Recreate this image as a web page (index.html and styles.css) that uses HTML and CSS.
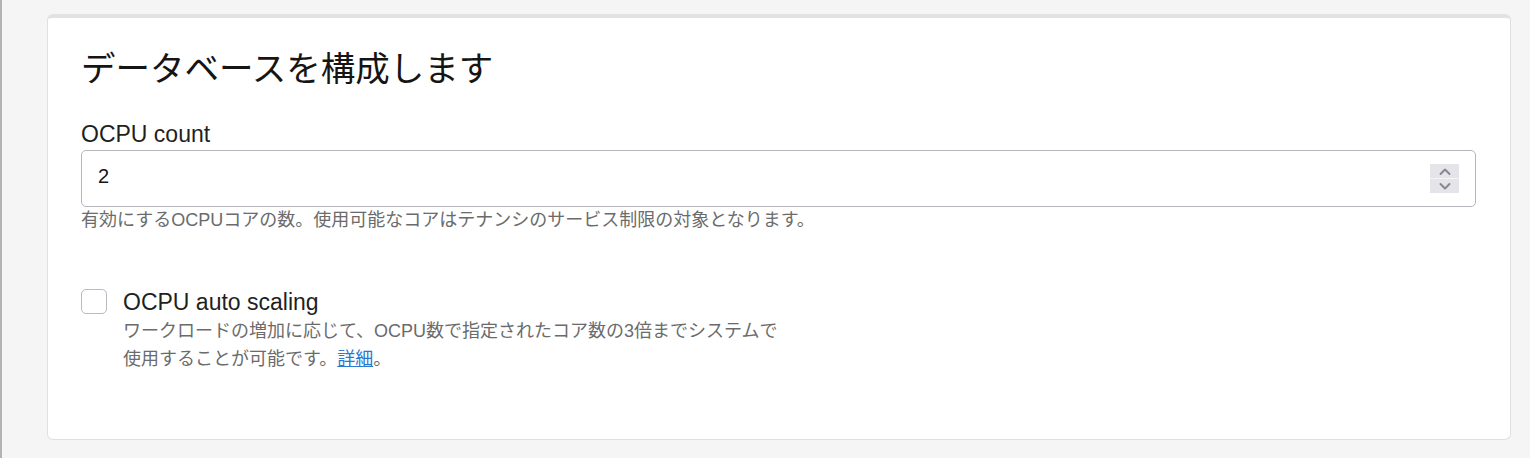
FILE: index.html
```html
<!DOCTYPE html>
<html lang="ja">
<head>
<meta charset="utf-8">
<title>データベースを構成します</title>
<link rel="stylesheet" href="styles.css">
</head>
<body>
<main class="page">
  <section class="card">
    <h1 class="title">データベースを構成します</h1>

    <div class="form-group">
      <label class="label" for="ocpu">OCPU count</label>
      <div class="field">
        <input class="field-input" id="ocpu" type="text" value="2">
        <div class="spinner" aria-hidden="true">
          <span class="spin-btn">
            <svg width="14" height="9" viewBox="0 0 14 9"><path d="M2.5 7 L7 2.5 L11.5 7" fill="none" stroke="#878793" stroke-width="2" stroke-linecap="round" stroke-linejoin="round"/></svg>
          </span>
          <span class="spin-btn">
            <svg width="14" height="9" viewBox="0 0 14 9"><path d="M2.5 2 L7 6.5 L11.5 2" fill="none" stroke="#878793" stroke-width="2" stroke-linecap="round" stroke-linejoin="round"/></svg>
          </span>
        </div>
      </div>
      <p class="help">有効にするOCPUコアの数。使用可能なコアはテナンシのサービス制限の対象となります。</p>
    </div>

    <div class="check-row">
      <input class="checkbox" type="checkbox" id="autoscale">
      <div class="check-body">
        <label class="check-label" for="autoscale">OCPU auto scaling</label>
        <p class="check-desc">ワークロードの増加に応じて、OCPU数で指定されたコア数の3倍までシステムで使用することが可能です。<a class="link" href="#">詳細</a>。</p>
      </div>
    </div>
  </section>
</main>
</body>
</html>
```

FILE: styles.css
```css
html, body {
  margin: 0;
  padding: 0;
}

body {
  background: #f5f5f5;
  border-left: 2px solid #b3b3b3;
  min-height: 458px;
  box-sizing: border-box;
  font-family: "Liberation Sans", Arial, "Noto Sans CJK JP", sans-serif;
  color: #161513;
}

.page {
  padding: 14px 19px 0 45px;
}

.card {
  background: #ffffff;
  border: 1px solid #e0e0e3;
  border-top: 4px solid #e1e1e6;
  border-radius: 6px;
  padding: 28px 34px 66px 33px;
}

.title {
  margin: 0 0 34px 0;
  font-family: "Noto Sans CJK JP", sans-serif;
  font-weight: 400;
  font-size: 34.5px;
  line-height: 40px;
  color: #161513;
}

.form-group {
  display: flex;
  flex-direction: column;
}

.label {
  display: block;
  font-size: 23px;
  line-height: 28px;
  margin-bottom: 2px;
  color: #1f1f1f;
}

.field {
  display: flex;
  align-items: center;
  height: 57px;
  box-sizing: border-box;
  border: 1px solid #b5b6bc;
  border-radius: 5px;
  padding: 0 16px 0 16px;
  background: #fff;
}

.field-input {
  flex: 1;
  border: none;
  outline: none;
  background: transparent;
  padding: 0 0 4px 0;
  margin: 0;
  font-family: "Liberation Sans", Arial, sans-serif;
  font-size: 20px;
  color: #161513;
}

.spinner {
  display: flex;
  flex-direction: column;
  width: 29px;
  height: 29px;
  background: #e4e4e9;
}

.spin-btn {
  flex: 1;
  display: flex;
  align-items: center;
  justify-content: center;
}

.spin-btn + .spin-btn {
  border-top: 1px solid #f4f4f6;
}

.help {
  margin: 0;
  font-size: 18px;
  line-height: 26px;
  color: #6b6b6b;
}

.check-row {
  display: flex;
  align-items: flex-start;
  gap: 16px;
  margin-top: 55px;
}

.checkbox {
  appearance: none;
  -webkit-appearance: none;
  margin: 1px 0 0 0;
  width: 26px;
  height: 25px;
  box-sizing: border-box;
  border: 1px solid #b8bbc2;
  border-radius: 5px;
  background: #fff;
  flex: none;
}

.check-body {
  display: flex;
  flex-direction: column;
}

.check-label {
  font-size: 23px;
  line-height: 28px;
  color: #1f1f1f;
}

.check-desc {
  margin: 1px 0 0 0;
  max-width: 662px;
  font-size: 18px;
  line-height: 28px;
  color: #6b6b6b;
}

.link {
  color: #2b78cf;
  text-decoration: underline;
}
```
